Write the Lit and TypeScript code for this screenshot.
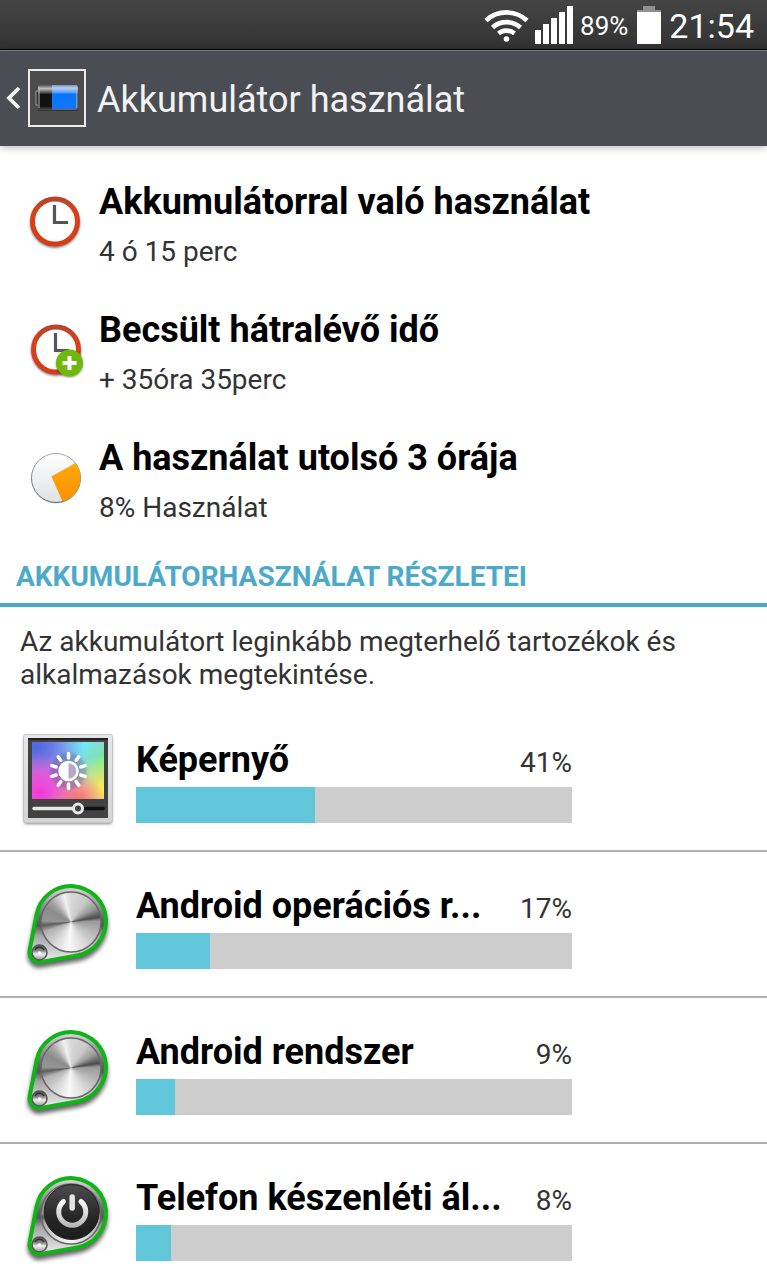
import { LitElement, html, css, svg, nothing } from "lit";
import { customElement, property } from "lit/decorators.js";

type IconName = "screen" | "dial" | "power";

const clockFace = svg`
  <defs>
    <linearGradient id="rim" x1="0" y1="0" x2="0" y2="1">
      <stop offset="0" stop-color="#b8442c" /><stop offset=".3" stop-color="#d8401c" /><stop offset="1" stop-color="#d63c14" />
    </linearGradient>
    <filter id="soft" x="-20%" y="-20%" width="140%" height="140%"><feGaussianBlur stdDeviation="1.2" /></filter>
  </defs>
  <circle cx="27" cy="29" r="25" fill="#000" opacity=".5" filter="url(#soft)" />
  <circle cx="27" cy="27.500" r="22.500" fill="#fff" stroke="url(#rim)" stroke-width="5" />
  <path d="M26.500 11v17.500H40" fill="none" stroke="#555" stroke-width="3.200" />`;

const clockIcon = html`<svg class="icon" viewBox="0 0 56 56" aria-hidden="true">${clockFace}</svg>`;

const clockPlusIcon = html`<svg class="icon" viewBox="0 0 56 56" aria-hidden="true">
  <g transform="translate(1 0)">${clockFace}</g>
  <circle cx="41.500" cy="42" r="13.500" fill="#000" opacity=".4" filter="url(#soft)" />
  <circle cx="41.500" cy="41" r="13.500" fill="#6fb90c" />
  <path d="M41.500 34v14M34.500 41h14" stroke="#fff" stroke-width="4" />
</svg>`;

const pieIcon = html`<svg class="icon" viewBox="0 0 56 56" aria-hidden="true">
  <defs>
    <linearGradient id="pie" x1="0" y1="0" x2="0" y2="1"><stop offset="0" stop-color="#fff" /><stop offset="1" stop-color="#dfe2e4" /></linearGradient>
    <linearGradient id="slice" x1="0" y1="0" x2="0" y2="1"><stop offset="0" stop-color="#ffa70a" /><stop offset="1" stop-color="#f99200" /></linearGradient>
    <linearGradient id="edge" x1="0" y1="0" x2="0" y2="1"><stop offset="0" stop-color="#aaa" /><stop offset="1" stop-color="#666" /></linearGradient>
  </defs>
  <circle cx="28" cy="28.500" r="25" fill="#000" opacity=".2" />
  <circle cx="28" cy="28" r="24.500" fill="url(#pie)" stroke="url(#edge)" />
  <path d="M23.500 26.500L47.500 13A24.500 24.500 0 0 1 34.500 51.500z" fill="url(#slice)" />
</svg>`;

const screenIcon = html`<svg viewBox="0 0 96 96" aria-hidden="true">
  <defs>
    <linearGradient id="frame" x1="0" y1="0" x2="0" y2="1"><stop offset="0" stop-color="#e4e6e8" /><stop offset="1" stop-color="#d4d4d4" /></linearGradient>
    <radialGradient id="blue" gradientUnits="userSpaceOnUse" cx="16" cy="16" r="48"><stop offset="0" stop-color="#4f66e0" /><stop offset=".35" stop-color="#6474e6" stop-opacity=".9" /><stop offset="1" stop-color="#7080e8" stop-opacity="0" /></radialGradient>
    <radialGradient id="cyan" gradientUnits="userSpaceOnUse" cx="62" cy="14" r="46"><stop offset="0" stop-color="#6cecf6" /><stop offset="1" stop-color="#6cecf6" stop-opacity="0" /></radialGradient>
    <radialGradient id="green" gradientUnits="userSpaceOnUse" cx="86" cy="34" r="30"><stop offset="0" stop-color="#6df48c" /><stop offset="1" stop-color="#6df48c" stop-opacity="0" /></radialGradient>
    <radialGradient id="pink" gradientUnits="userSpaceOnUse" cx="20" cy="62" r="40"><stop offset="0" stop-color="#f638d8" /><stop offset=".5" stop-color="#ee4fd4" stop-opacity=".8" /><stop offset="1" stop-color="#e85cd8" stop-opacity="0" /></radialGradient>
    <radialGradient id="red" gradientUnits="userSpaceOnUse" cx="58" cy="70" r="28"><stop offset="0" stop-color="#ff6a62" /><stop offset="1" stop-color="#ff7878" stop-opacity="0" /></radialGradient>
    <radialGradient id="yellow" gradientUnits="userSpaceOnUse" cx="84" cy="58" r="34"><stop offset="0" stop-color="#fff04c" /><stop offset="1" stop-color="#fff04c" stop-opacity="0" /></radialGradient>
    <filter id="shade" x="-20%" y="-20%" width="140%" height="140%"><feGaussianBlur stdDeviation="1.500" /></filter>
  </defs>
  <rect x="4" y="6" width="88" height="87" rx="2" opacity=".45" filter="url(#shade)" />
  <rect x="3.500" y="3.500" width="89" height="88" rx="2" fill="url(#frame)" stroke="#c2c4c6" />
  <rect x="8" y="7" width="80" height="80" fill="#424242" />
  <path d="M8 7h80v2H8z" fill="#222" />
  <rect x="12" y="11" width="72" height="57" fill="#c6a6e8" />
  <rect x="12" y="11" width="72" height="57" fill="url(#cyan)" />
  <rect x="12" y="11" width="72" height="57" fill="url(#blue)" />
  <rect x="12" y="11" width="72" height="57" fill="url(#green)" />
  <rect x="12" y="11" width="72" height="57" fill="url(#yellow)" />
  <rect x="12" y="11" width="72" height="57" fill="url(#pink)" />
  <rect x="12" y="11" width="72" height="57" fill="url(#red)" />
  <g opacity=".35" filter="url(#shade)"><circle cx="48.500" cy="40" r="18" fill="#557" /></g>
  ${Array.from({ length: 10 }, (_, i) => svg`<path d="M48.500 22.500v4.500" transform=${`rotate(${i * 36} 48.500 40)`} stroke="#fff" stroke-width="3.500" stroke-linecap="round" />`)}
  <circle cx="48.500" cy="40" r="9" fill="#b4a8c8" stroke="#fff" stroke-width="2.500" />
  <path d="M48.500 31a9 9 0 0 0 0 18z" fill="#fff" />
  <path d="M14 77.500h44" stroke="#e8e8e8" stroke-width="3.500" stroke-linecap="round" />
  <path d="M62 77.500h21" stroke="#111" stroke-width="3.500" stroke-linecap="round" />
  <circle cx="58" cy="77.500" r="4.500" fill="#444" stroke="#e8e8e8" stroke-width="3" />
</svg>`;

const dialIcon = (power: boolean) => html`<svg viewBox="0 0 96 96" aria-hidden="true">
  <defs>
    <linearGradient id="plate" x1="0" y1="0" x2="0" y2="1"><stop offset="0" stop-color="#dcdcdc" /><stop offset=".42" stop-color="#666" /><stop offset=".52" stop-color="#555" /><stop offset=".65" stop-color="#a4a4a4" /><stop offset="1" stop-color="#f0f0f0" /></linearGradient>
    <linearGradient id="ball" x1="0" y1="0" x2="0" y2="1"><stop offset="0" stop-color="#555" /><stop offset=".4" stop-color="#8a8a8a" /><stop offset=".6" stop-color="#eee" /><stop offset="1" stop-color="#999" /></linearGradient>
    <linearGradient id="dark" x1="0" y1="0" x2="0" y2="1"><stop offset="0" stop-color="#4c4c4c" /><stop offset=".6" stop-color="#262626" /><stop offset="1" stop-color="#1c1c1c" /></linearGradient>
    <linearGradient id="lit" x1="0" y1="0" x2="0" y2="1"><stop offset="0" stop-color="#fafafa" /><stop offset="1" stop-color="#b8b8b8" /></linearGradient>
    <filter id="drop" x="-20%" y="-20%" width="140%" height="140%"><feGaussianBlur stdDeviation="2.200" /></filter>
  </defs>
  <path d="M16.600 41.300A35 35 0 1 1 57.100 82.500L21.200 88.900A10 10 0 0 1 9.700 77.100z" stroke="#000" stroke-width="4" opacity=".6" filter="url(#drop)" />
  <path d="M16.600 37.300A35 35 0 1 1 57.100 78.500L21.200 84.900A10 10 0 0 1 9.700 73.100z" fill="url(#plate)" stroke="#0fb516" stroke-width="4" />
  <foreignObject x="21" y="15" width="60" height="60"><div class="disc"></div></foreignObject>
  <circle cx="51" cy="45" r="30" fill="none" stroke="#666" stroke-width="1.500" />
  <circle cx="19.500" cy="75.500" r="7.500" fill="url(#ball)" stroke="#555" stroke-width="1.500" />
  <path d="M15 73a5 5 0 0 1 9 0" fill="none" stroke="#333" stroke-width="1.500" />
  <circle cx="19.500" cy="76" r="1.800" fill="#fff" />
  ${power
    ? svg`<circle cx="51.700" cy="43" r="27.500" fill="url(#dark)" stroke="#222" />
      <path d="M43.500 32.500a13.500 13.500 0 1 0 17.500 0" fill="none" stroke="url(#lit)" stroke-width="5" stroke-linecap="round" />
      <path d="M52.200 28v11" stroke="#e4e4e4" stroke-width="5.500" stroke-linecap="round" />`
    : nothing}
</svg>`;

@customElement("status-bar")
class StatusBar extends LitElement {
  static styles = css`
    :host {
      display: flex; align-items: center; justify-content: flex-end; flex: none;
      height: 50px; box-sizing: border-box; padding-right: 13px;
      border-bottom: 1px solid #050505;
      background: linear-gradient(#454545, #323232); color: #fff;
    }
    svg { display: block; flex: none; }
    .level { font-size: 26px; margin: 2px 9px 0 7px; }
    .time { font-size: 34px; margin: 2px 0 0 8px; }
  `;
  render() {
    return html`
      <svg width="45" height="34" viewBox="0 0 45 34" aria-hidden="true">
        <g fill="none" stroke="#fff" stroke-width="4.600">
          <path d="M2 12.500a30 30 0 0 1 41 0" />
          <path d="M8.500 19.500a21 21 0 0 1 28 0" />
          <path d="M14.500 25.500a12.500 12.500 0 0 1 16 0" />
        </g>
        <circle cx="22.500" cy="31" r="2.800" fill="#fff" />
      </svg>
      <svg width="44" height="38" viewBox="0 0 44 38" aria-hidden="true">
        <path d="M6 24h6v14H6zM14 18h6v20h-6zM22 12h6v26h-6zM30 6h6v32h-6zM38 0h6v38h-6z" fill="#fff" />
      </svg>
      <span class="level">89%</span>
      <svg width="24" height="38" viewBox="0 0 24 38" aria-hidden="true">
        <path d="M6 0h12v4h6v3H0V4h6z" fill="#909090" /><path d="M0 6h24v32H0z" fill="#fff" />
      </svg>
      <span class="time">21:54</span>`;
  }
}

@customElement("title-bar")
class TitleBar extends LitElement {
  static styles = css`
    :host {
      display: block; flex: none; height: 96px; box-sizing: border-box; z-index: 1;
      background: #4a4d54; border-top: 1px solid #777b80;
      box-shadow: 0 1px 8px rgba(0, 0, 0, 0.3);
    }
    .back {
      display: flex; align-items: center; gap: 7px; height: 94px; padding: 0 0 0 6px;
      border: 0; background: none; font: inherit; color: #f2f2f2;
    }
    .title { margin: 0 0 0 4px; font-size: 36px; font-weight: 400; padding-top: 4px; }
    svg { display: block; }
  `;
  render() {
    return html`<button class="back">
      <svg width="15" height="26" viewBox="0 0 15 26" aria-hidden="true">
        <path d="M13 3L3 13l10 10" fill="none" stroke="#f2f2f2" stroke-width="3.800" />
      </svg>
      <svg width="58" height="58" viewBox="0 0 58 58" aria-hidden="true">
        <defs>
          <linearGradient id="cell" x1="0" y1="0" x2="0" y2="1"><stop offset="0" stop-color="#7a92b4" /><stop offset=".12" stop-color="#b4d0f4" /><stop offset=".3" stop-color="#5aa0f8" /><stop offset=".36" stop-color="#0a74ff" /><stop offset=".84" stop-color="#0a78ff" /><stop offset="1" stop-color="#4a6c98" /></linearGradient>
          <linearGradient id="glass" x1="0" y1="0" x2="0" y2="1"><stop offset="0" stop-color="#555" /><stop offset=".14" stop-color="#bbb" /><stop offset=".3" stop-color="#555" /><stop offset=".38" stop-color="#111" /><stop offset=".85" stop-color="#111" /><stop offset="1" stop-color="#555" /></linearGradient>
        </defs>
        <rect x="1" y="1" width="56" height="56" fill="#4c4c4c" stroke="#ededed" stroke-width="2" />
        <path d="M8 22h4v14H8z" fill="#333" stroke="#999" />
        <rect x="10" y="16" width="40" height="25" rx="1" fill="url(#glass)" />
        <path d="M24 16h25v25H24z" fill="url(#cell)" />
        <path d="M11 18v21M49 18v21" stroke="#bbb" stroke-width="1.500" opacity=".7" />
        <path d="M10 41.500h40" stroke="#333" />
      </svg>
      <h1 class="title">Akkumulátor használat</h1>
    </button>`;
  }
}

@customElement("usage-row")
class UsageRow extends LitElement {
  @property() name = "";
  @property() icon: IconName = "dial";
  @property({ type: Number }) percent = 0;

  static styles = css`
    :host {
      display: flex; height: 146px; box-sizing: border-box; padding: 25px 20px 0;
      border-bottom: 2px solid #b0b0b0;
    }
    svg { display: block; flex: none; width: 96px; height: 96px; }
    .disc {
      width: 100%; height: 100%; border-radius: 50%;
      background: conic-gradient(#d8d8d8, #c8c8c8 35deg, #9a9a9a 60deg, #4c4c4c 80deg, #999 88deg, #bcbcbc 120deg, #dcdcdc 150deg, #f8f8f8 185deg, #d4d4d4 220deg, #b0b0b0 250deg, #5c5c5c 263deg, #949494 272deg, #8c8c8c 300deg, #a0a0a0 315deg, #f0f0f0 345deg, #d8d8d8);
    }
    .body { flex: 0 1 436px; margin-left: 20px; }
    .head { display: flex; justify-content: space-between; align-items: baseline; height: 56px; box-sizing: border-box; padding-top: 7px; }
    .name { font-size: 36px; line-height: 44px; font-weight: 700; color: #000; white-space: nowrap; }
    .value { font-size: 28px; color: #333; }
    .track { height: 36px; background: #cdcdcd; }
    .fill { height: 36px; background: #62c6db; }
  `;
  render() {
    return html`
      ${this.icon === "screen" ? screenIcon : dialIcon(this.icon === "power")}
      <div class="body">
        <div class="head"><span class="name">${this.name}</span><span class="value">${this.percent}%</span></div>
        <div class="track"><div class="fill" style="width:${this.percent}%"></div></div>
      </div>`;
  }
}

@customElement("app-root")
class AppRoot extends LitElement {
  static styles = css`
    :host {
      display: flex; flex-direction: column; height: 100vh; overflow: hidden;
      background: #fff; color: #333; font-family: Roboto, "Noto Sans", sans-serif;
    }
    main { flex: 1; min-height: 0; overflow-y: auto; scrollbar-width: none; padding-top: 16px; }
    .summary { display: flex; height: 128px; box-sizing: border-box; padding: 18px 28px 0; gap: 15px; }
    .icon { display: block; flex: none; width: 56px; height: 56px; margin-top: 14px; }
    .heading { margin: 0; font-size: 36px; line-height: 44px; font-weight: 700; color: #000; }
    .detail { margin: 10px 0 0; font-size: 28px; line-height: 36px; }
    .section {
      margin: 0; height: 61px; box-sizing: border-box; padding: 13px 16px 0;
      font-size: 28px; line-height: 36px; font-weight: 700; color: #4caac8;
      border-bottom: 4px solid #4ea7c8;
    }
    .intro { margin: 0; padding: 18px 20px 15px; font-size: 28px; line-height: 33px; }
  `;

  private summaries = [
    { icon: clockIcon, title: "Akkumulátorral való használat", text: "4 ó 15 perc" },
    { icon: clockPlusIcon, title: "Becsült hátralévő idő", text: "+ 35óra 35perc" },
    { icon: pieIcon, title: "A használat utolsó 3 órája", text: "8% Használat" },
  ];

  private rows: { name: string; icon: IconName; percent: number }[] = [
    { name: "Képernyő", icon: "screen", percent: 41 },
    { name: "Android operációs r...", icon: "dial", percent: 17 },
    { name: "Android rendszer", icon: "dial", percent: 9 },
    { name: "Telefon készenléti ál...", icon: "power", percent: 8 },
  ];

  render() {
    return html`
      <status-bar></status-bar>
      <title-bar></title-bar>
      <main>
        ${this.summaries.map((s) => html`<section class="summary">
          ${s.icon}
          <div><h2 class="heading">${s.title}</h2><p class="detail">${s.text}</p></div>
        </section>`)}
        <h2 class="section">AKKUMULÁTORHASZNÁLAT RÉSZLETEI</h2>
        <p class="intro">Az akkumulátort leginkább megterhelő tartozékok és alkalmazások megtekintése.</p>
        ${this.rows.map((r) => html`<usage-row .name=${r.name} .icon=${r.icon} .percent=${r.percent}></usage-row>`)}
      </main>`;
  }
}
